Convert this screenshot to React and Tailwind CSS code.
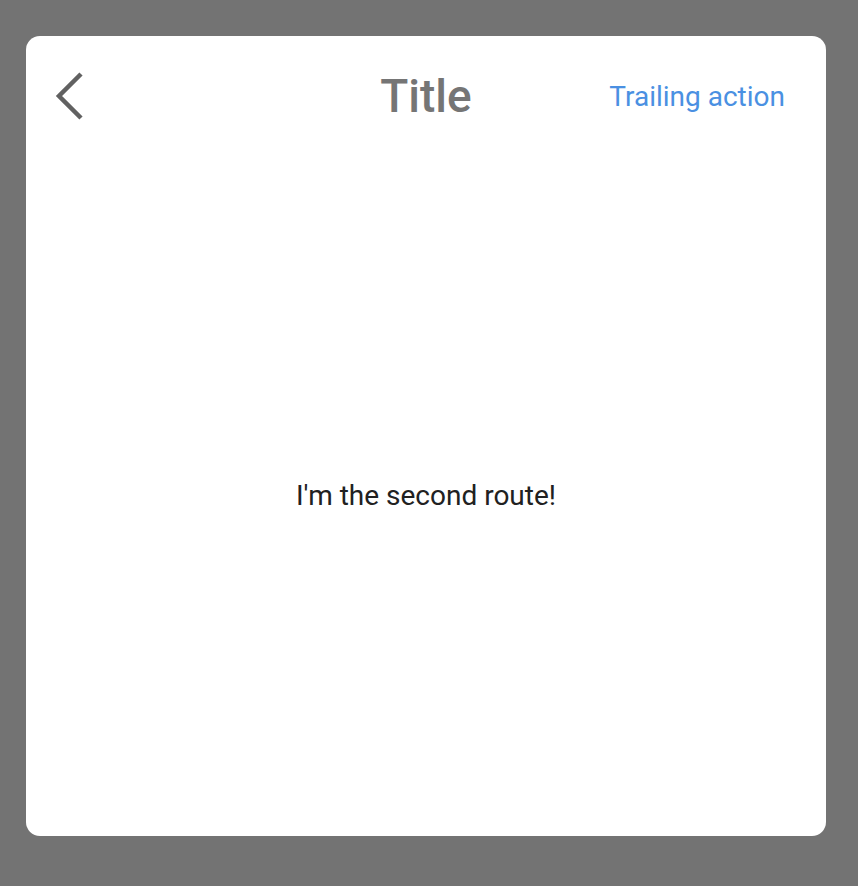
export default function App() {
    return (
        <div className="w-[858px] h-[886px] bg-[#737373] pl-[26px] pt-[36px] font-['Roboto',sans-serif]">
            <div className="w-[800px] h-[800px] bg-white rounded-[14px] flex flex-col">
                {/* Header */}
                <div className="relative h-[120px] flex items-center px-[28px]">
                    <button className="w-[40px] h-[56px] flex items-center">
                        <svg width="30" height="48" viewBox="0 0 30 48" fill="none">
                            <path d="M27 2 L5 24 L27 46" stroke="#616161" strokeWidth="4.5" />
                        </svg>
                    </button>
                    <div className="absolute left-0 right-0 text-center pointer-events-none">
                        <span className="text-[46px] font-medium text-[#757575]">Title</span>
                    </div>
                    <button className="ml-auto mr-[13px] mt-[2px] text-[28px] text-[#4a90e2]">Trailing action</button>
                </div>
                {/* Body */}
                <div className="flex-1 flex items-center justify-center">
                    <p className="text-[28px] text-[#212121]">I'm the second route!</p>
                </div>
            </div>
        </div>
    );
}
